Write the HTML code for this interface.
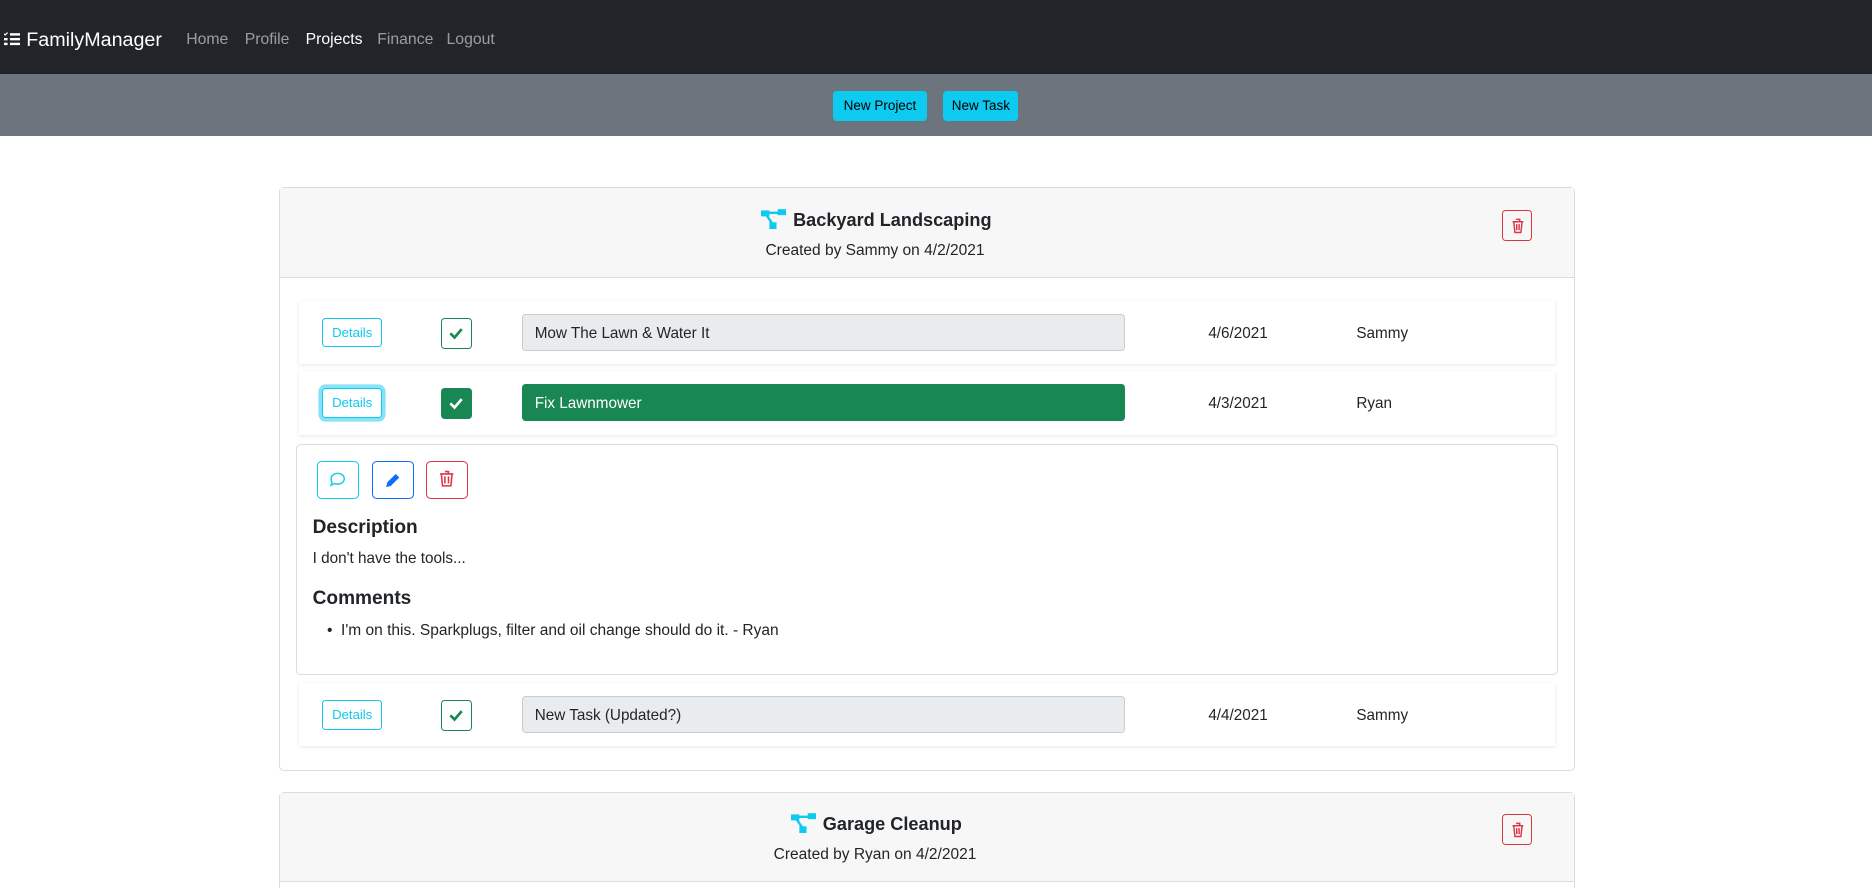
<!DOCTYPE html>
<html><head><meta charset="utf-8"><style>
*{box-sizing:border-box;margin:0;padding:0}
html,body{width:1872px;height:888px;overflow:hidden;background:#fff}
#w{zoom:1.194;width:1568px;height:744px;position:relative;font-family:"Liberation Sans",sans-serif;color:#212529;font-size:14px}
.a{position:absolute}
.nav{left:0;top:0;width:1568px;height:62px;background:#212529}
.nav span{position:absolute;top:26px;font-size:13.2px;color:rgba(255,255,255,.55)}
.band{left:0;top:62px;width:1568px;height:52px;background:#6c757d}
.bt{position:absolute;background:#0dcaf0;border-radius:3px;font-size:11.3px;color:#000;text-align:center;line-height:25px;height:25px;top:76px}
.card{border:1px solid #dcdcdc;border-radius:4px;left:234px;width:1085px}
.hdr{background:#f7f7f7;border-bottom:1px solid #dcdcdc;position:absolute;left:0;top:0;width:100%;height:75px}
.title{position:absolute;left:0;width:998px;text-align:center;top:16px;font-size:15.2px;font-weight:bold}
.sub{position:absolute;left:0;width:996px;text-align:center;top:45px;font-size:13px}
.trash{position:absolute;left:1023px;top:18px;width:25px;height:26px;border:1px solid #dc3545;border-radius:3px}
.row{left:250px;width:1052px;height:53px;background:#fff;box-shadow:0 1px 3px rgba(0,0,0,.1)}
.det{position:absolute;left:20px;top:14px;width:50px;height:25px;border:1px solid #0dcaf0;border-radius:3px;color:#0dcaf0;font-size:11px;text-align:center;line-height:23px}
.chk{position:absolute;left:119px;top:14px;width:26px;height:26px;border:1px solid #198754;border-radius:3px}
.inp{position:absolute;left:187px;top:11px;width:505px;height:31px;background:#e9ecef;border:1px solid #ccc;border-radius:3px;padding-left:10px;line-height:31px;font-size:12.8px}
.dt{position:absolute;left:762px;top:20px;font-size:12.8px}
.nm{position:absolute;left:886px;top:20px;font-size:12.8px}
.ib{position:absolute;top:13px;width:35px;height:32px;border:1px solid;border-radius:4px}
</style></head><body><div id="w">
<div class="a nav">
<svg class="a" style="left:3px;top:27px" width="14" height="12" viewBox="0 0 14 12"><g fill="#fff"><rect x="5" y="1" width="9" height="2"/><rect x="5" y="5" width="9" height="2"/><rect x="5" y="9" width="9" height="2"/><rect x="0" y="5" width="3" height="2"/><rect x="0" y="9" width="3" height="2"/><path d="M0 1.5l1 1 2-2" stroke="#fff" fill="none"/></g></svg>
<span style="left:22px;top:24px;font-size:16.5px;color:#fff">FamilyManager</span>
<span style="left:156px">Home</span><span style="left:205px">Profile</span><span style="left:256px;color:#fff">Projects</span><span style="left:316px">Finance</span><span style="left:374px">Logout</span>
</div>
<div class="a band"></div>
<div class="bt" style="left:698px;width:78px">New Project</div>
<div class="bt" style="left:790px;width:63px">New Task</div>

<div class="a card" style="top:157px;height:489px">
<div class="hdr"><div class="title"><svg width="21" height="18" viewBox="0 0 21 18" style="vertical-align:-3px;margin-right:6px"><g fill="#0dcaf0"><rect x="0" y="2" width="7" height="5"/><rect x="14" y="1" width="7" height="5"/><rect x="7" y="12" width="6" height="6"/></g><path d="M4 5l6 9M6 4h9" stroke="#0dcaf0" stroke-width="2"/></svg>Backyard Landscaping</div>
<div class="sub">Created by Sammy on 4/2/2021</div>
<div class="trash"><svg width="25" height="26" viewBox="0 0 25 26"><path d="M8 9h9M11 7h3v2M9 9l1 9h5l1-9M11.5 11v5M13.5 11v5" stroke="#dc3545" stroke-width="1.2" fill="none"/></svg></div></div>
</div>
<div class="a row" style="top:252px"><div class="det">Details</div><div class="chk"><svg width="24" height="24"><path d="M7 12l3.5 3.5 6-7" stroke="#198754" stroke-width="2.2" fill="none"/></svg></div><div class="inp">Mow The Lawn &amp; Water It</div><div class="dt">4/6/2021</div><div class="nm">Sammy</div></div>
<div class="a row" style="top:311px"><div class="det" style="box-shadow:0 0 0 3px #86e2f7">Details</div><div class="chk" style="background:#198754"><svg width="24" height="24"><path d="M7 12l3.5 3.5 6-7" stroke="#fff" stroke-width="2.2" fill="none"/></svg></div><div class="inp" style="background:#198754;color:#fff;border-color:#198754">Fix Lawnmower</div><div class="dt">4/3/2021</div><div class="nm">Ryan</div></div>
<div class="a" style="left:248px;top:372px;width:1057px;height:193px;border:1px solid #dcdcdc;border-radius:4px;background:#fff">
<div class="ib" style="left:17px;border-color:#0dcaf0"><svg width="33" height="30"><path d="M11 14a5.5 4.5 0 1 1 3 4l-3 1.5 .8-2.5a5 4 0 0 1-.8-3z" stroke="#0dcaf0" stroke-width="1.2" fill="none"/></svg></div>
<div class="ib" style="left:63px;border-color:#0d6efd"><svg width="33" height="30"><path d="M11 21l1-4 7-7 3 3-7 7z" fill="#0d6efd"/></svg></div>
<div class="ib" style="left:108px;border-color:#dc3545"><svg width="33" height="30"><path d="M11 10h11M15 8h3v2M12 10l1 10h7l1-10M15 12v6M18 12v6" stroke="#dc3545" stroke-width="1.3" fill="none"/></svg></div>
<div class="a" style="left:13px;top:60px;font-size:16px;font-weight:bold">Description</div>
<div class="a" style="left:13px;top:88px;font-size:12.8px">I don't have the tools...</div>
<div class="a" style="left:13px;top:120px;font-size:16px;font-weight:bold">Comments</div>
<div class="a" style="left:25px;top:148px;font-size:13px">•&nbsp;&nbsp;I'm on this. Sparkplugs, filter and oil change should do it. - Ryan</div>
</div>
<div class="a row" style="top:572px"><div class="det">Details</div><div class="chk"><svg width="24" height="24"><path d="M7 12l3.5 3.5 6-7" stroke="#198754" stroke-width="2.2" fill="none"/></svg></div><div class="inp">New Task (Updated?)</div><div class="dt">4/4/2021</div><div class="nm">Sammy</div></div>

<div class="a card" style="top:663px;height:100px">
<div class="hdr"><div class="title"><svg width="21" height="18" viewBox="0 0 21 18" style="vertical-align:-3px;margin-right:6px"><g fill="#0dcaf0"><rect x="0" y="2" width="7" height="5"/><rect x="14" y="1" width="7" height="5"/><rect x="7" y="12" width="6" height="6"/></g><path d="M4 5l6 9M6 4h9" stroke="#0dcaf0" stroke-width="2"/></svg>Garage Cleanup</div>
<div class="sub">Created by Ryan on 4/2/2021</div>
<div class="trash"><svg width="25" height="26" viewBox="0 0 25 26"><path d="M8 9h9M11 7h3v2M9 9l1 9h5l1-9M11.5 11v5M13.5 11v5" stroke="#dc3545" stroke-width="1.2" fill="none"/></svg></div></div>
</div>
</div></body></html>
